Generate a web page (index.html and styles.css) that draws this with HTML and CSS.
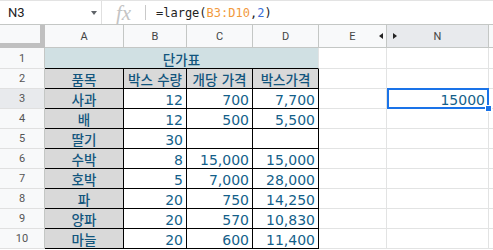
FILE: index.html
```html
<!DOCTYPE html>
<html lang="ko">
<head>
    <meta charset="UTF-8">
    <title>단가표</title>
    <link rel="stylesheet" href="styles.css">
</head>
<body>
<div class="sheet">
    <!--수식 입력줄-->
    <div class="formula-bar">
        <div class="name-box"><span class="cell-ref">N3</span><span class="caret"></span></div>
        <div class="fx">fx</div>
        <div class="divider"></div>
        <div class="formula">=large(<span class="ref">B3:D10</span>,<span class="lit">2</span>)</div>
    </div>
    <!--시트-->
    <div class="grid">
        <div class="corner"></div>
        <div class="col-head">A</div>
        <div class="col-head">B</div>
        <div class="col-head">C</div>
        <div class="col-head">D</div>
        <div class="col-head">E<span class="hide-left"></span></div>
        <div class="col-head sel">N<span class="hide-right"></span></div>
        <div class="col-head"></div>

        <div class="row-head">1</div>
        <div class="cell title ko">단가표</div>
        <div class="cell"></div>
        <div class="cell"></div>
        <div class="cell"></div>

        <div class="row-head">2</div>
        <div class="cell ko label boxed">품목</div>
        <div class="cell ko label boxed">박스 수량</div>
        <div class="cell ko label boxed">개당 가격</div>
        <div class="cell ko label boxed">박스가격</div>
        <div class="cell"></div>
        <div class="cell"></div>
        <div class="cell"></div>

        <div class="row-head sel">3</div>
        <div class="cell ko label boxed">사과</div>
        <div class="cell num boxed">12</div>
        <div class="cell num boxed">700</div>
        <div class="cell num boxed">7,700</div>
        <div class="cell"></div>
        <div class="cell num active">15000<span class="selection"><span class="handle"></span></span></div>
        <div class="cell"></div>

        <div class="row-head">4</div>
        <div class="cell ko label boxed">배</div>
        <div class="cell num boxed">12</div>
        <div class="cell num boxed">500</div>
        <div class="cell num boxed">5,500</div>
        <div class="cell"></div>
        <div class="cell"></div>
        <div class="cell"></div>

        <div class="row-head">5</div>
        <div class="cell ko label boxed">딸기</div>
        <div class="cell num boxed">30</div>
        <div class="cell num boxed"></div>
        <div class="cell num boxed"></div>
        <div class="cell"></div>
        <div class="cell"></div>
        <div class="cell"></div>

        <div class="row-head">6</div>
        <div class="cell ko label boxed">수박</div>
        <div class="cell num boxed">8</div>
        <div class="cell num boxed">15,000</div>
        <div class="cell num boxed">15,000</div>
        <div class="cell"></div>
        <div class="cell"></div>
        <div class="cell"></div>

        <div class="row-head">7</div>
        <div class="cell ko label boxed">호박</div>
        <div class="cell num boxed">5</div>
        <div class="cell num boxed">7,000</div>
        <div class="cell num boxed">28,000</div>
        <div class="cell"></div>
        <div class="cell"></div>
        <div class="cell"></div>

        <div class="row-head">8</div>
        <div class="cell ko label boxed">파</div>
        <div class="cell num boxed">20</div>
        <div class="cell num boxed">750</div>
        <div class="cell num boxed">14,250</div>
        <div class="cell"></div>
        <div class="cell"></div>
        <div class="cell"></div>

        <div class="row-head">9</div>
        <div class="cell ko label boxed">양파</div>
        <div class="cell num boxed">20</div>
        <div class="cell num boxed">570</div>
        <div class="cell num boxed">10,830</div>
        <div class="cell"></div>
        <div class="cell"></div>
        <div class="cell"></div>

        <div class="row-head">10</div>
        <div class="cell ko label boxed">마늘</div>
        <div class="cell num boxed">20</div>
        <div class="cell num boxed">600</div>
        <div class="cell num boxed">11,400</div>
        <div class="cell"></div>
        <div class="cell"></div>
        <div class="cell"></div>
    </div>
</div>
</body>
</html>
```
FILE: styles.css
```css
* {
    margin: 0;
    padding: 0;
    box-sizing: border-box;
}

body {
    width: 493px;
    height: 250px;
    overflow: hidden;
    background-color: #fff;
}

.sheet {
    width: 493px;
    height: 250px;
    display: flex;
    flex-direction: column;
}

/* 수식 입력줄 */
.formula-bar {
    height: 25px;
    flex: none;
    display: flex;
    align-items: center;
    border-top: 1px solid #e3e3e3;
    border-bottom: 1px solid #c4c7c5;
}

.name-box {
    width: 102px;
    height: 100%;
    display: flex;
    align-items: center;
    padding-left: 8px;
    border-right: 1px solid #e0e0e0;
}

.cell-ref {
    font: 13px Roboto, "Liberation Sans", sans-serif;
    color: #222;
}

.caret {
    margin-left: auto;
    margin-right: 4px;
    width: 0;
    height: 0;
    border-left: 3.5px solid transparent;
    border-right: 3.5px solid transparent;
    border-top: 4px solid #5f6368;
}

.fx {
    width: 43px;
    text-align: center;
    font: italic 21px "Liberation Serif", serif;
    line-height: 22px;
    color: #c4c4c4;
}

.divider {
    width: 1px;
    height: 15px;
    background-color: #c9c9c9;
}

.formula {
    padding-left: 10px;
    font: 12px "DejaVu Sans Mono", monospace;
    color: #222;
}

.formula .ref {
    color: #f29a3c;
}

.formula .lit {
    color: #3c6fd8;
}

/* 시트 */
.grid {
    flex: 1;
    display: grid;
    grid-template-columns: 45px 79px 63px 66px 66px 68px 102px 1fr;
    grid-template-rows: 23px 21px repeat(9, 20px) 1fr;
}

.corner {
    background-color: #f8f9fa;
    border-right: 5px solid #c0c0c0;
    border-bottom: 5px solid #c0c0c0;
}

.col-head {
    position: relative;
    display: flex;
    align-items: center;
    justify-content: center;
    background-color: #f8f9fa;
    border-right: 1px solid #c4c7c5;
    border-bottom: 1px solid #c4c7c5;
    font: 11px Roboto, "Liberation Sans", sans-serif;
    color: #444;
}

.row-head {
    display: flex;
    align-items: center;
    justify-content: center;
    background-color: #f8f9fa;
    border-right: 1px solid #c4c7c5;
    border-bottom: 1px solid #e0e0e0;
    font: 11px Roboto, "Liberation Sans", sans-serif;
    color: #555;
}

.sel {
    background-color: #e8eaed;
}

.hide-left {
    position: absolute;
    right: 3px;
    top: 8px;
    border-top: 3px solid transparent;
    border-bottom: 3px solid transparent;
    border-right: 4px solid #222;
}

.hide-right {
    position: absolute;
    left: 6px;
    top: 8px;
    border-top: 3px solid transparent;
    border-bottom: 3px solid transparent;
    border-left: 4px solid #222;
}

.cell {
    display: flex;
    align-items: flex-end;
    padding: 0 3px;
    border-right: 1px solid #e2e3e3;
    border-bottom: 1px solid #e2e3e3;
    font: 14px "DejaVu Sans", "Noto Sans CJK KR", sans-serif;
    line-height: 15px;
    color: #145f8a;
    white-space: nowrap;
}

.ko {
    justify-content: center;
    font-size: 13.5px;
    font-weight: 500;
    color: #12557d;
}

.num {
    justify-content: flex-end;
}

.title {
    grid-column: span 4;
    background-color: #d0e0e3;
    border-bottom-color: #000;
}

.label {
    background-color: #d9d9d9;
}

.boxed {
    border-right-color: #000;
    border-bottom-color: #000;
}

.active {
    position: relative;
}

.selection {
    position: absolute;
    top: -1px;
    left: 0;
    right: -1px;
    bottom: -1px;
    border: 2px solid #1a73e8;
}

.handle {
    position: absolute;
    right: -5px;
    bottom: -5px;
    width: 7px;
    height: 7px;
    background-color: #1a73e8;
    border: 1px solid #fff;
}
```
